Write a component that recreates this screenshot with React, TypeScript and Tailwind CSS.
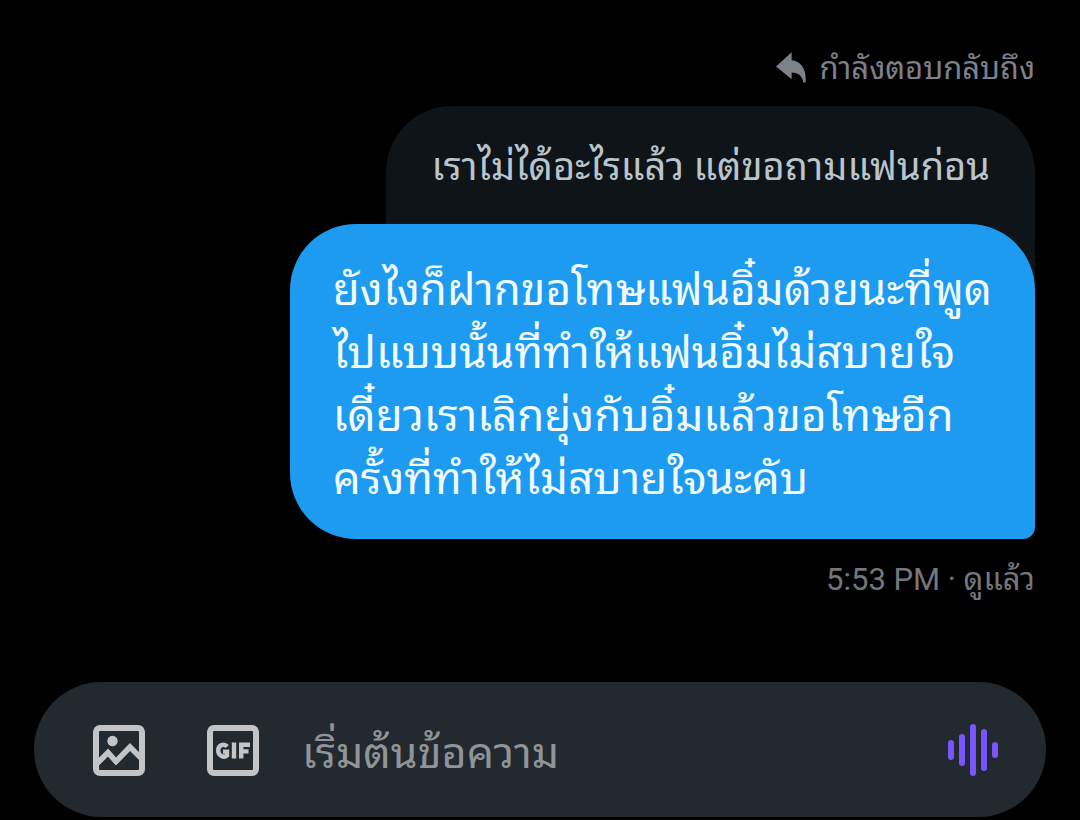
import React from "react";

const messageLines = [
  "ยังไงก็ฝากขอโทษแฟนอิ๋มด้วยนะที่พูด",
  "ไปแบบนั้นที่ทำให้แฟนอิ๋มไม่สบายใจ",
  "เดี๋ยวเราเลิกยุ่งกับอิ๋มแล้วขอโทษอีก",
  "ครั้งที่ทำให้ไม่สบายใจนะคับ",
];

function ReplyIcon() {
  return (
    <svg viewBox="0 0 90 92" className="h-[31px] w-[30px] shrink-0 fill-[#7c818a]" aria-hidden="true">
      <path d="M0 43 47 0V24C76 26 92 52 89 91H82C79 72 67 61 47 61V81Z" />
    </svg>
  );
}

function ImageIcon() {
  return (
    <svg viewBox="0 0 52 52" className="size-[52px] overflow-visible" fill="none" aria-hidden="true">
      <rect x="3" y="4" width="46" height="45" rx="4" stroke="#c3c4c6" strokeWidth="6" />
      <circle cx="19.5" cy="17" r="5.2" fill="#c3c4c6" />
      <path d="M4 39.5 15 28.5 23 37.5 37 23 49 35" stroke="#c3c4c6" strokeWidth="5.6" />
    </svg>
  );
}

function GifIcon() {
  return (
    <svg viewBox="0 0 52 52" className="size-[52px] overflow-visible" fill="none" aria-hidden="true">
      <rect x="3" y="4" width="46" height="45" rx="4" stroke="#c3c4c6" strokeWidth="6" />
      <path
        d="M20.3 22.6C16.8 18.8 11.2 21.2 11.2 26.5S17 34 20 31.6V27.6H16M27 18.5V34.5M34.2 34.5V20.7H43M34.2 27.4H41.5"
        stroke="#c3c4c6"
        strokeWidth="4.4"
      />
    </svg>
  );
}

function VoiceIcon() {
  return (
    <svg viewBox="0 0 50 54" className="h-[54px] w-[50px]" fill="none" aria-hidden="true">
      <path
        d="M3 20V34M14 14V40M25 4V50M36 9V45M47 22V32"
        stroke="#7856ff"
        strokeWidth="6"
        strokeLinecap="round"
      />
    </svg>
  );
}

export default function App() {
  return (
    <div className="flex min-h-screen flex-col bg-black font-['Roboto','Noto_Sans_Thai_Looped','Loma',sans-serif]">
      <main className="flex flex-1 flex-col items-end px-[45px] pt-12">
        <div className="flex h-[58px] items-start gap-3.5 text-[31px] leading-[42px] text-[#7c818a]">
          <span className="pt-1">
            <ReplyIcon />
          </span>
          <span>กำลังตอบกลับถึง</span>
        </div>
        <blockquote className="rounded-t-[66px] bg-[#0f1418] px-[45px] pt-[31px] pb-[107px] text-[38px] leading-[60px] text-[#b9c5cd]">
          เราไม่ได้อะไรแล้ว แต่ขอถามแฟนก่อน
        </blockquote>
        <p className="relative -mt-20 rounded-[66px] rounded-br-[12px] bg-[#1d9bf0] px-[43px] pt-[35px] pb-[28px] text-[44px] leading-[63px] text-[#f0faff]">
          {messageLines.map((line) => (
            <span key={line} className="block">
              {line}
            </span>
          ))}
        </p>
        <p className="pt-5 text-[31px] leading-[42px] text-[#74777c]">
          <time>5:53 PM</time> · ดูแล้ว
        </p>
      </main>
      <form
        className="mx-[34px] mb-[3px] flex h-[135px] items-center rounded-full bg-[#22292f] pr-12 pl-[59px]"
        onSubmit={(event) => event.preventDefault()}
      >
        <button type="button" aria-label="รูปภาพ" className="mr-[62px]">
          <ImageIcon />
        </button>
        <button type="button" aria-label="GIF" className="mr-[43px]">
          <GifIcon />
        </button>
        <input
          type="text"
          aria-label="เริ่มต้นข้อความ"
          placeholder="เริ่มต้นข้อความ"
          className="h-20 min-w-0 flex-1 bg-transparent pt-1.5 text-[43px] leading-[64px] text-white outline-none placeholder:text-[#909499]"
        />
        <button type="button" aria-label="ข้อความเสียง">
          <VoiceIcon />
        </button>
      </form>
    </div>
  );
}
